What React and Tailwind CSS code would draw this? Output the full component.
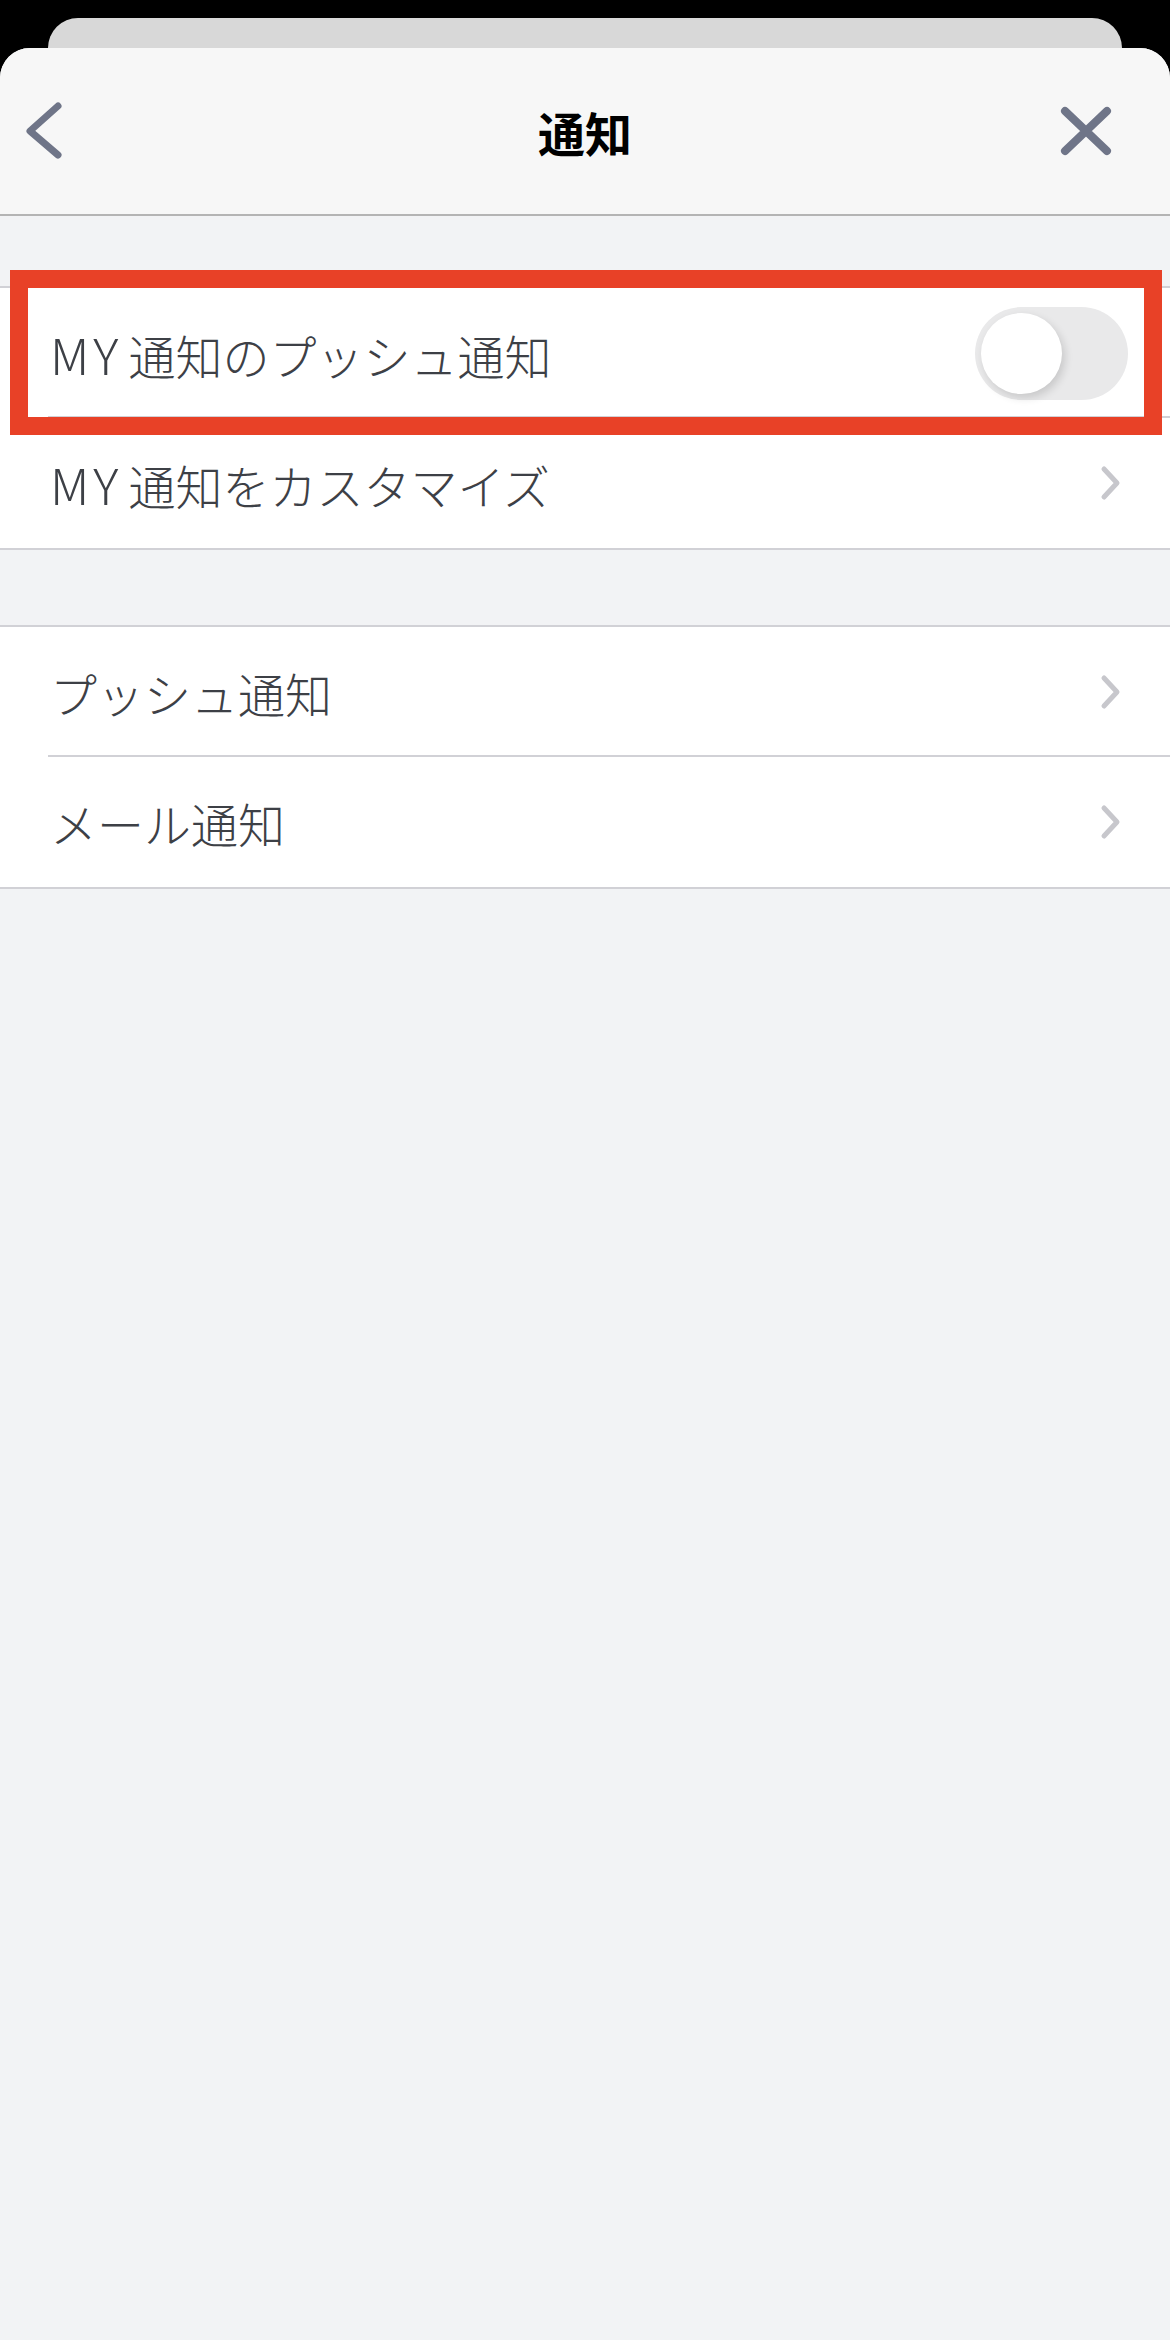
import React from 'react';

const FONT = { fontFamily: '"Noto Sans CJK JP", "Noto Sans", sans-serif' };

function ChevronRight() {
  return (
    <svg width="24" height="40" viewBox="0 0 24 40" fill="none" className="shrink-0">
      <path d="M6 6 L19 20 L6 34" stroke="#c7c7cc" strokeWidth="5" strokeLinecap="round" strokeLinejoin="round" />
    </svg>
  );
}

function Toggle() {
  return (
    <div className="w-[153px] h-[93px] rounded-full bg-[#e9e9ea] p-[6px] flex items-center">
      <div className="w-[81px] h-[81px] rounded-full bg-white shadow-[3px_4px_8px_rgba(0,0,0,0.14)]" />
    </div>
  );
}

function Row({ label, right, divider }) {
  return (
    <div className="relative h-[130px] flex items-center justify-between pl-[50px]">
      <span className="text-[47px] leading-none font-light text-[#3d4046]">{label}</span>
      {right}
      {divider && <div className="absolute bottom-0 left-[48px] right-0 h-[2px] bg-[#d1d1d6]" />}
    </div>
  );
}

const MY = <span className="text-[50px] tracking-[0.08em] mr-[6px]">MY</span>;

export default function App() {
  return (
    <div className="min-h-[2340px] bg-black flex flex-col pt-[18px]" style={FONT}>
      {/* stacked sheet behind */}
      <div className="mx-[48px] h-[30px] rounded-t-[30px] bg-[#d8d8d8]" />

      <div className="flex-1 rounded-t-[30px] bg-[#f2f3f5] overflow-hidden flex flex-col">
        {/* Header */}
        <header className="h-[168px] bg-[#f7f7f7] border-b-2 border-[#b4b4b4] grid grid-cols-[1fr_auto_1fr] items-center">
          <div className="pl-[20px]">
            <svg width="48" height="64" viewBox="0 0 48 64" fill="none">
              <path d="M38 7 L10 32 L38 56" stroke="#6f7588" strokeWidth="7" strokeLinecap="round" strokeLinejoin="round" />
            </svg>
          </div>
          <h1 className="text-[47px] font-bold text-black leading-none">通知</h1>
          <div className="flex justify-end pr-[56px]">
            <svg width="56" height="56" viewBox="0 0 56 56" fill="none">
              <path d="M7 8 L49 48 M49 8 L7 48" stroke="#6f7588" strokeWidth="8" strokeLinecap="round" />
            </svg>
          </div>
        </header>

        {/* MY通知 */}
        <section className="mt-[70px] bg-white border-y-2 border-[#d1d1d6]">
          <div className="relative">
            <Row label={<>{MY}通知のプッシュ通知</>} right={<div className="pr-[42px]"><Toggle /></div>} divider />
            <div className="absolute -top-[18px] -bottom-[17px] left-[10px] right-[8px] border-[18px] border-[#e84127] pointer-events-none" />
          </div>
          <Row label={<>{MY}通知をカスタマイズ</>} right={<div className="pr-[48px]"><ChevronRight /></div>} />
        </section>

        {/* 通知設定 */}
        <section className="mt-[75px] bg-white border-y-2 border-[#d1d1d6]">
          <Row label="プッシュ通知" right={<div className="pr-[48px]"><ChevronRight /></div>} divider />
          <Row label="メール通知" right={<div className="pr-[48px]"><ChevronRight /></div>} />
        </section>
      </div>
    </div>
  );
}
